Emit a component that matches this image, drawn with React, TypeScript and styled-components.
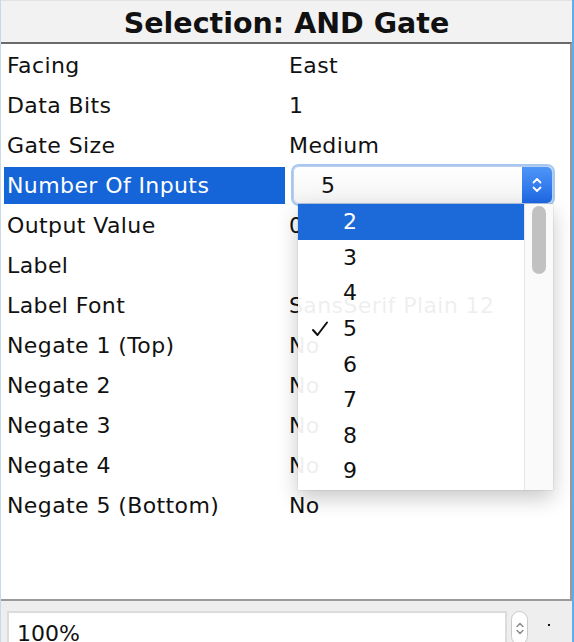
import styled, { createGlobalStyle } from "styled-components";

const GlobalStyle = createGlobalStyle`
  html, body {
    margin: 0;
    padding: 0;
    background: #eeeeee;
  }
  body {
    font-family: "DejaVu Sans", "Noto Sans", sans-serif;
  }
`;

const rows: { label: string; value: string; selected?: boolean }[] = [
  { label: "Facing", value: "East" },
  { label: "Data Bits", value: "1" },
  { label: "Gate Size", value: "Medium" },
  { label: "Number Of Inputs", value: "5", selected: true },
  { label: "Output Value", value: "0/1" },
  { label: "Label", value: "" },
  { label: "Label Font", value: "SansSerif Plain 12" },
  { label: "Negate 1 (Top)", value: "No" },
  { label: "Negate 2", value: "No" },
  { label: "Negate 3", value: "No" },
  { label: "Negate 4", value: "No" },
  { label: "Negate 5 (Bottom)", value: "No" },
];

const options = ["2", "3", "4", "5", "6", "7", "8", "9"];

function UpDown({ color, size }: { color: string; size: number }) {
  return (
    <svg width={size} height={size * 1.5} viewBox="0 0 12 18" fill="none">
      <path d="M2.5 6.5 L6 3 L9.5 6.5" stroke={color} strokeWidth="1.8" strokeLinecap="round" strokeLinejoin="round" />
      <path d="M2.5 11.5 L6 15 L9.5 11.5" stroke={color} strokeWidth="1.8" strokeLinecap="round" strokeLinejoin="round" />
    </svg>
  );
}

function Check() {
  return (
    <svg width="18" height="16" viewBox="0 0 18 16" fill="none">
      <path d="M2 9 L6.5 14 L16 1.5" stroke="#111" strokeWidth="2" strokeLinecap="round" strokeLinejoin="round" />
    </svg>
  );
}

export default function App() {
  return (
    <>
      <GlobalStyle />
      <Window>
        <TitleBar>Selection: AND Gate</TitleBar>
        <Table>
          {rows.map((row) => (
            <Row key={row.label}>
              <LabelCell>
                <LabelText $selected={row.selected}>{row.label}</LabelText>
              </LabelCell>
              <ValueCell>
                {row.selected ? (
                  <ComboWrap>
                    <Combo>
                      <ComboText>{row.value}</ComboText>
                      <ComboButton>
                        <UpDown color="#ffffff" size={12} />
                      </ComboButton>
                    </Combo>
                    <Popup>
                      <List>
                        {options.map((opt, i) => (
                          <Item key={opt} $active={i === 0}>
                            <CheckSlot>{opt === row.value && <Check />}</CheckSlot>
                            {opt}
                          </Item>
                        ))}
                      </List>
                      <ScrollTrack>
                        <Thumb />
                      </ScrollTrack>
                    </Popup>
                  </ComboWrap>
                ) : (
                  <ValueText>{row.value}</ValueText>
                )}
              </ValueCell>
            </Row>
          ))}
        </Table>
        <Footer>
          <ZoomField>100%</ZoomField>
          <Spinner>
            <UpDown color="#8a8a8a" size={10} />
          </Spinner>
          <Dot />
        </Footer>
      </Window>
    </>
  );
}

const Window = styled.div`
  width: 574px;
  height: 642px;
  box-sizing: border-box;
  display: flex;
  flex-direction: column;
  border-right: 2px solid #62ace8;
  border-left: 1px solid #c9d9ea;
  overflow: hidden;
`;

const TitleBar = styled.div`
  height: 42px;
  flex: none;
  display: flex;
  align-items: center;
  justify-content: center;
  background: #f2f2f2;
  border-top: 1px solid #e2e2e2;
  font-weight: bold;
  font-size: 28.5px;
  color: #111;
  padding-top: 3px;
  box-sizing: border-box;
`;

const Table = styled.div`
  height: 559px;
  flex: none;
  box-sizing: border-box;
  background: #ffffff;
  border-top: 2px solid #6b6b6b;
  border-left: 1px solid #9a9a9a;
  border-right: 2px solid #9a9a9a;
  border-bottom: 2px solid #9a9a9a;
  margin-left: -1px;
  padding-top: 1px;
`;

const Row = styled.div`
  display: grid;
  grid-template-columns: 284px 1fr;
  height: 40px;
`;

const LabelCell = styled.div`
  padding: 2px 0 1px 3px;
  display: flex;
`;

const LabelText = styled.div<{ $selected?: boolean }>`
  flex: 1;
  display: flex;
  align-items: center;
  padding-left: 3px;
  font-size: 22px;
  letter-spacing: 0.4px;
  color: ${({ $selected }) => ($selected ? "#ffffff" : "#111")};
  background: ${({ $selected }) => ($selected ? "#1565d8" : "transparent")};
`;

const ValueCell = styled.div`
  display: flex;
  align-items: center;
  padding-left: 4px;
`;

const ValueText = styled.span`
  font-size: 22px;
  letter-spacing: 0.4px;
  color: #111;
`;

const ComboWrap = styled.div`
  position: relative;
  margin-left: 4px;
  width: 260px;
  height: 40px;
`;

const Combo = styled.div`
  height: 38px;
  margin-top: 1px;
  box-sizing: border-box;
  display: flex;
  align-items: stretch;
  background: linear-gradient(#ffffff, #f4f4f4);
  border: 1px solid #b9cfee;
  border-radius: 6px;
  box-shadow: 0 0 0 2px #a7c6f0;
`;

const ComboText = styled.div`
  flex: 1;
  display: flex;
  align-items: center;
  padding-left: 27px;
  font-size: 22px;
  color: #111;
`;

const ComboButton = styled.div`
  width: 30px;
  display: flex;
  align-items: center;
  justify-content: center;
  background: linear-gradient(#4f95f7, #1d68e4);
  border-radius: 0 5px 5px 0;
`;

const Popup = styled.div`
  position: absolute;
  top: 39px;
  left: 5px;
  width: 255px;
  height: 286px;
  display: flex;
  background: rgba(255, 255, 255, 0.93);
  box-shadow: 0 8px 20px rgba(0, 0, 0, 0.22), 0 0 1px rgba(0, 0, 0, 0.3);
  z-index: 10;
`;

const List = styled.div`
  flex: 1;
  display: flex;
  flex-direction: column;
`;

const Item = styled.div<{ $active?: boolean }>`
  height: 35.6px;
  display: flex;
  align-items: center;
  font-size: 22px;
  color: ${({ $active }) => ($active ? "#ffffff" : "#111")};
  background: ${({ $active }) => ($active ? "rgba(21, 101, 216, 0.97)" : "transparent")};
`;

const CheckSlot = styled.span`
  width: 45px;
  display: flex;
  justify-content: flex-end;
  padding-right: 14px;
  box-sizing: border-box;
`;

const ScrollTrack = styled.div`
  width: 29px;
  background: #fafafa;
  border-left: 1px solid #e6e6e6;
  box-sizing: border-box;
  padding: 2px 7px 0 7px;
`;

const Thumb = styled.div`
  height: 68px;
  border-radius: 7px;
  background: #c1c1c1;
`;

const Footer = styled.div`
  flex: 1;
  display: flex;
  align-items: flex-start;
  padding: 10px 0 0 6px;
  background: #eeeeee;
`;

const ZoomField = styled.div`
  width: 500px;
  height: 40px;
  box-sizing: border-box;
  background: #ffffff;
  border: 2px solid #dcdcdc;
  padding: 8px 0 0 8px;
  font-size: 22px;
  color: #111;
`;

const Spinner = styled.div`
  margin-left: 4px;
  width: 17px;
  height: 34px;
  box-sizing: border-box;
  border: 1px solid #c9c9c9;
  border-radius: 9px;
  background: #ffffff;
  display: flex;
  align-items: center;
  justify-content: center;
`;

const Dot = styled.div`
  width: 2px;
  height: 2px;
  background: #111;
  margin: 13px 0 0 20px;
`;
